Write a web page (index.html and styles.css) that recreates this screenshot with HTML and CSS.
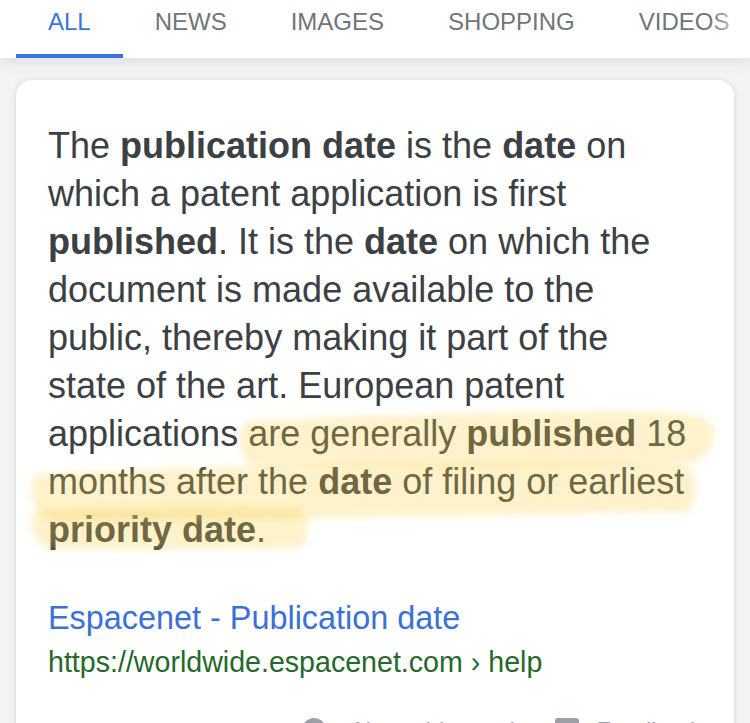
FILE: index.html
```html
<!DOCTYPE html>
<html>
<head>
<meta charset="utf-8">
<link rel="stylesheet" href="styles.css">
</head>
<body>
<header class="tabs">
  <div class="tab active">ALL</div>
  <div class="tab">NEWS</div>
  <div class="tab">IMAGES</div>
  <div class="tab">SHOPPING</div>
  <div class="tab">VIDEOS</div>
</header>
<main class="page">
  <section class="card">
    <p class="answer">The <b>publication date</b> is the <b>date</b> on<br>which a patent application is first<br><b>published</b>. It is the <b>date</b> on which the<br>document is made available to the<br>public, thereby making it part of the<br>state of the art. European patent<br>applications are generally <b>published</b> 18<br>months after the <b>date</b> of filing or earliest<br><b>priority date</b>.</p>
    <a class="title">Espacenet - Publication date</a>
    <div class="url">https://worldwide.espacenet.com › help</div>
    <div class="footer">
      <span class="fitem about"><span class="ico-circle"></span>About this result</span>
      <span class="fitem"><span class="ico-square"></span>Feedback</span>
    </div>
    <svg class="marker" width="750" height="723" viewBox="0 0 750 723">
      <defs>
        <filter id="soft" x="-10%" y="-30%" width="120%" height="160%">
          <feGaussianBlur stdDeviation="3.5"/>
        </filter>
      </defs>
      <g filter="url(#soft)" fill="rgb(248,208,70)" fill-opacity="0.28">
        <path d="M246 422 C330 416 480 412 600 411 C665 410 704 414 712 424 C718 436 712 452 696 462 C600 468 420 468 252 466 C238 458 236 432 246 422 Z"/>
        <path d="M36 474 C200 466 450 462 684 464 C698 470 698 500 688 512 C500 516 250 518 60 522 C32 520 26 484 36 474 Z"/>
        <path d="M36 510 C120 506 220 506 300 508 C310 518 310 540 300 548 C200 550 110 550 46 548 C30 540 28 518 36 510 Z"/>
      </g>
    </svg>
  </section>
</main>
</body>
</html>
```
FILE: styles.css
```css
html, body {
  margin: 0;
  padding: 0;
}
body {
  background: #f3f3f5;
  font-family: "Liberation Sans", Arial, sans-serif;
  width: 750px;
  height: 723px;
  overflow: hidden;
}
.tabs {
  position: relative;
  display: flex;
  height: 58px;
  padding-left: 16px;
  background: #fff;
  box-shadow: 0 3px 14px rgba(60, 64, 67, 0.12);
  z-index: 2;
  overflow: hidden;
}
.tabs::after {
  content: "";
  position: absolute;
  right: 0;
  top: 0;
  width: 40px;
  height: 58px;
  background: linear-gradient(to right, rgba(255,255,255,0), #fff);
}
.tab {
  padding: 0 32px;
  font-size: 24px;
  line-height: 44px;
  color: #70757a;
  white-space: nowrap;
  box-sizing: border-box;
  height: 58px;
  border-bottom: 4px solid transparent;
}
.tab.active {
  color: #3b73df;
  border-bottom-color: #3b73df;
}
.page {
  padding: 22px 16px 0 16px;
}
.card {
  position: relative;
  background: #fff;
  border-radius: 16px;
  box-shadow: 0 1px 6px rgba(60, 64, 67, 0.16);
  padding: 42px 32px 40px 32px;
  height: 700px;
  box-sizing: border-box;
}
.answer {
  margin: 0;
  font-size: 36px;
  line-height: 48px;
  color: #3c4043;
  white-space: nowrap;
}
.answer b {
  font-weight: bold;
}
.title {
  display: block;
  margin-top: 44px;
  font-size: 32.4px;
  line-height: 40px;
  color: #3b6fd9;
  text-decoration: none;
}
.url {
  margin-top: 6px;
  font-size: 28.6px;
  line-height: 36px;
  color: #25692a;
}
.footer {
  display: flex;
  justify-content: flex-end;
  gap: 33px;
  margin-top: 36px;
  font-size: 24px;
  line-height: 30px;
  color: #9aa0a6;
}
.fitem {
  display: flex;
  align-items: flex-start;
  gap: 18px;
}
.fitem.about {
  gap: 24px;
}
.ico-circle {
  width: 24px;
  height: 24px;
  border-radius: 50%;
  background: #9aa0a6;
  margin-top: 2px;
}
.ico-square {
  width: 24px;
  height: 24px;
  border-radius: 3px;
  background: #9aa0a6;
  margin-top: 2px;
}
.marker {
  position: absolute;
  left: -16px;
  top: -80px;
  pointer-events: none;
}
```
